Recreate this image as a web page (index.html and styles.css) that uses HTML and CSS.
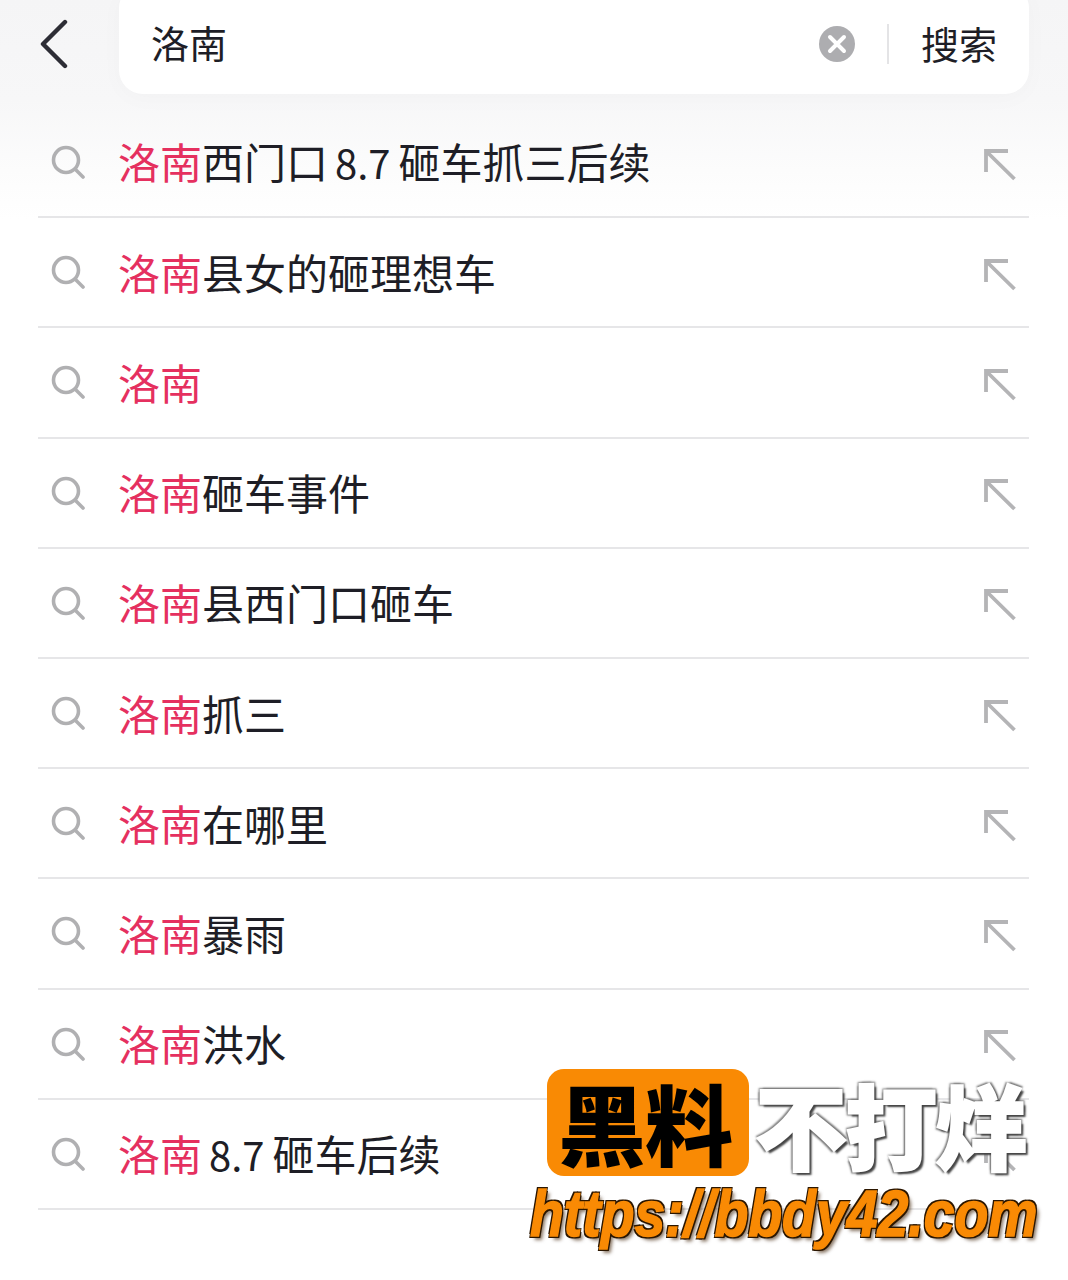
FILE: index.html
```html
<!DOCTYPE html>
<html lang="zh-CN">
<head>
  <meta charset="UTF-8">
  <meta name="viewport" content="width=device-width, initial-scale=1.0">
  <title>洛南 搜索</title>
  <link rel="stylesheet" href="styles.css">
</head>
<body>
  <svg width="0" height="0" class="defs">
    <symbol id="icon-search" viewBox="0 0 34 34">
      <circle cx="15" cy="15" r="12.5" fill="none" stroke="#b0b0b2" stroke-width="3.6"/>
      <path d="M24.5 24.5 L32 32" fill="none" stroke="#b0b0b2" stroke-width="3.6" stroke-linecap="round"/>
    </symbol>
    <symbol id="icon-arrow" viewBox="0 0 32 32">
      <path d="M24 2 H2 V23 M2.5 2.5 L30.5 30" fill="none" stroke="#b4b4b6" stroke-width="3.8"/>
    </symbol>
  </svg>

  <div id="header">
    <button class="back" type="button">
      <svg width="30" height="50" viewBox="0 0 30 50"><path d="M26 3 L4 25 L26 47" fill="none" stroke="#2d2d35" stroke-width="4.4" stroke-linecap="round" stroke-linejoin="round"/></svg>
    </button>
    <div class="search-box">
      <span class="query">洛南</span>
      <svg class="clear" width="36" height="36" viewBox="0 0 36 36">
        <circle cx="18" cy="18" r="18" fill="#adadb0"/>
        <path d="M11 11 L25 25 M25 11 L11 25" stroke="#fff" stroke-width="4" stroke-linecap="round"/>
      </svg>
      <span class="divider"></span>
      <span class="submit">搜索</span>
    </div>
  </div>

  <ul id="suggest-list">
    <li class="row">
      <svg class="icon-search" width="34" height="34"><use href="#icon-search"/></svg>
      <span class="label"><em>洛南</em>西门口<span class="num">8.7</span>砸车抓三后续</span>
      <svg class="icon-arrow" width="32" height="32"><use href="#icon-arrow"/></svg>
    </li>
    <li class="row">
      <svg class="icon-search" width="34" height="34"><use href="#icon-search"/></svg>
      <span class="label"><em>洛南</em>县女的砸理想车</span>
      <svg class="icon-arrow" width="32" height="32"><use href="#icon-arrow"/></svg>
    </li>
    <li class="row">
      <svg class="icon-search" width="34" height="34"><use href="#icon-search"/></svg>
      <span class="label"><em>洛南</em></span>
      <svg class="icon-arrow" width="32" height="32"><use href="#icon-arrow"/></svg>
    </li>
    <li class="row">
      <svg class="icon-search" width="34" height="34"><use href="#icon-search"/></svg>
      <span class="label"><em>洛南</em>砸车事件</span>
      <svg class="icon-arrow" width="32" height="32"><use href="#icon-arrow"/></svg>
    </li>
    <li class="row">
      <svg class="icon-search" width="34" height="34"><use href="#icon-search"/></svg>
      <span class="label"><em>洛南</em>县西门口砸车</span>
      <svg class="icon-arrow" width="32" height="32"><use href="#icon-arrow"/></svg>
    </li>
    <li class="row">
      <svg class="icon-search" width="34" height="34"><use href="#icon-search"/></svg>
      <span class="label"><em>洛南</em>抓三</span>
      <svg class="icon-arrow" width="32" height="32"><use href="#icon-arrow"/></svg>
    </li>
    <li class="row">
      <svg class="icon-search" width="34" height="34"><use href="#icon-search"/></svg>
      <span class="label"><em>洛南</em>在哪里</span>
      <svg class="icon-arrow" width="32" height="32"><use href="#icon-arrow"/></svg>
    </li>
    <li class="row">
      <svg class="icon-search" width="34" height="34"><use href="#icon-search"/></svg>
      <span class="label"><em>洛南</em>暴雨</span>
      <svg class="icon-arrow" width="32" height="32"><use href="#icon-arrow"/></svg>
    </li>
    <li class="row">
      <svg class="icon-search" width="34" height="34"><use href="#icon-search"/></svg>
      <span class="label"><em>洛南</em>洪水</span>
      <svg class="icon-arrow" width="32" height="32"><use href="#icon-arrow"/></svg>
    </li>
    <li class="row">
      <svg class="icon-search" width="34" height="34"><use href="#icon-search"/></svg>
      <span class="label"><em>洛南</em><span class="num">8.7</span>砸车后续</span>
      <svg class="icon-arrow" width="32" height="32"><use href="#icon-arrow"/></svg>
    </li>
  </ul>

  <!-- watermark sits over the last rows -->
  <div class="watermark">
    <div class="wm-top">
      <span class="wm-badge">黑料</span>
      <span class="wm-title">不打烊</span>
    </div>
    <div class="wm-url">https://bbdy42.com</div>
  </div>
</body>
</html>
```

FILE: styles.css
```css
html, body {
  margin: 0;
  padding: 0;
}

body {
  position: relative;
  width: 1068px;
  height: 1280px;
  overflow: hidden;
  font-family: "Noto Sans CJK SC", "Noto Sans", sans-serif;
  color: #1e1e26;
  background: linear-gradient(to bottom, #f5f5f6 0, #f7f7f8 100px, #fcfcfc 170px, #fff 220px);
}

.defs {
  position: absolute;
}

#header {
  display: flex;
  height: 94px;
  padding-right: 39px;
}

.back {
  flex: none;
  width: 119px;
  padding: 0 12px 6px 0;
  border: 0;
  background: none;
  display: flex;
  align-items: center;
  justify-content: center;
  box-sizing: border-box;
}

.search-box {
  flex: 1;
  display: flex;
  align-items: center;
  height: 110px;
  margin-top: -16px;
  padding: 16px 32px 0 32px;
  box-sizing: border-box;
  background: #fff;
  border-radius: 24px;
  box-shadow: 0 4px 24px rgba(0, 0, 0, 0.025);
}

.query {
  flex: 1;
  font-size: 38px;
  line-height: 50px;
  margin-bottom: 10px;
}

.clear {
  margin-right: 32px;
  margin-bottom: 6px;
}

.divider {
  width: 2px;
  height: 40px;
  margin-right: 32px;
  margin-bottom: 6px;
  background: #e4e4e6;
}

.submit {
  font-size: 38px;
  line-height: 50px;
  margin-bottom: 9px;
}

#suggest-list {
  list-style: none;
  margin: 14px 39px 0 38px;
  padding: 0;
}

.row {
  display: flex;
  align-items: center;
  height: 110.2px;
  box-sizing: border-box;
  border-bottom: 2px solid #e6e6e8;
}

.icon-search {
  flex: none;
  margin: 0 33px 0 13px;
}

.label {
  flex: 1;
  font-size: 42px;
  line-height: 56px;
  white-space: nowrap;
  margin-bottom: 1px;
}

.label em {
  font-style: normal;
  color: #e5305f;
}

.num {
  margin: 0 8px 0 7px;
  font-size: 40px;
}

.icon-arrow {
  flex: none;
  margin: 5px 13px 0 0;
}

.watermark {
  position: absolute;
  left: 530px;
  top: 1069px;
  width: 520px;
}

.wm-top {
  display: flex;
  align-items: center;
  margin-left: 17px;
}

.wm-badge {
  width: 202px;
  height: 107px;
  padding-right: 6px;
  box-sizing: border-box;
  background: #f98a04;
  border-radius: 17px;
  color: #000;
  font-size: 88px;
  font-weight: 900;
  line-height: 104px;
  text-align: center;
  letter-spacing: -1px;
  white-space: nowrap;
}

.wm-title {
  margin-left: 6px;
  color: #fff;
  font-size: 92px;
  font-weight: 900;
  line-height: 107px;
  letter-spacing: -2px;
  white-space: nowrap;
  -webkit-text-stroke: 2px #fff;
  text-shadow: 3px 3px 2px #444, 2px -2px 2px #777, -2px 2px 2px #777, -2px -2px 2px #888;
}

.wm-url {
  margin-top: 5px;
  color: #f98a04;
  font-family: "Liberation Sans", Arial, sans-serif;
  font-size: 64px;
  font-weight: 700;
  font-style: italic;
  line-height: 66px;
  white-space: nowrap;
  transform: scaleX(0.865);
  transform-origin: left center;
  -webkit-text-stroke: 1.5px #f98a04;
  text-shadow: 2px 2px 0 #2b1600, -2px -2px 0 #2b1600, 2px -2px 0 #2b1600, -2px 2px 0 #2b1600, 4px 4px 4px rgba(60, 30, 0, 0.6);
}
```
